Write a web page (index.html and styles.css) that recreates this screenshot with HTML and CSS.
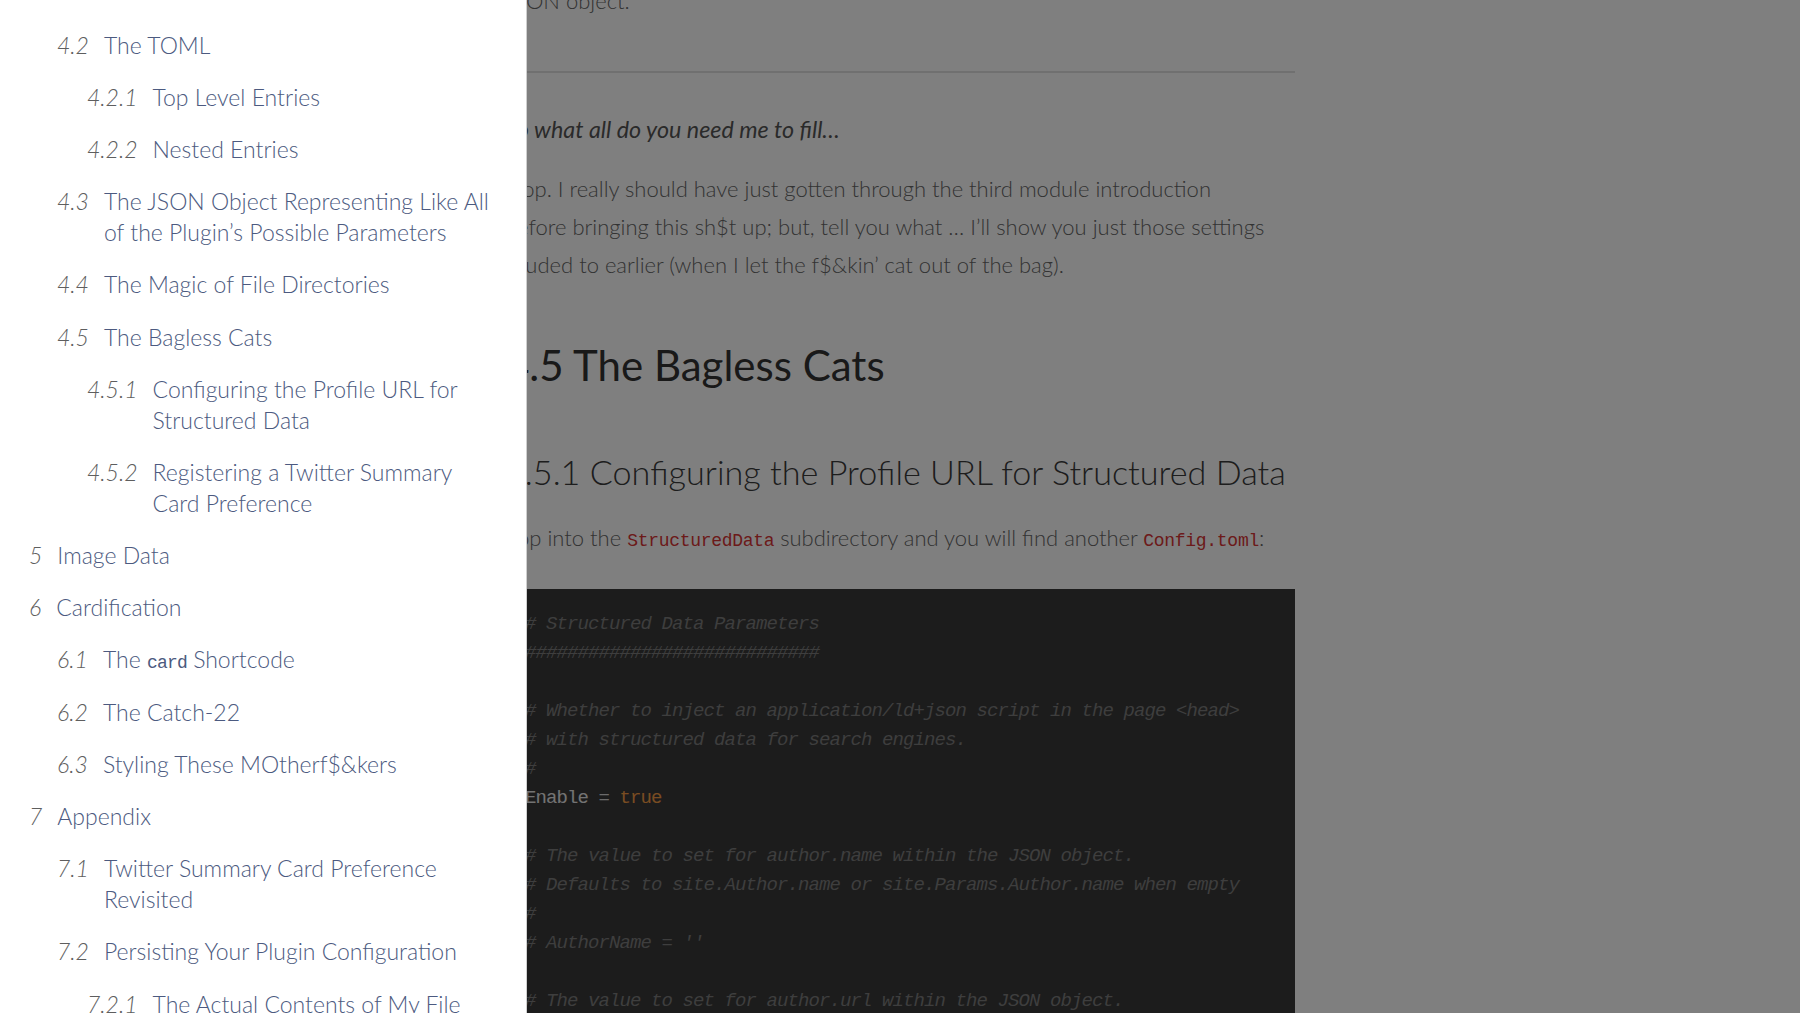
FILE: index.html
```html
<!DOCTYPE html>
<html lang="en">
<head>
<meta charset="utf-8">
<title>Hugo Plugins — Structured Data</title>
<link rel="stylesheet" href="styles.css">
</head>
<body>
<main class="page">
  <article class="content">
    <p class="tail">JSON object.</p>
    <hr class="rule">
    <p class="lead"><em>So what all do you need me to fill…</em></p>
    <p class="body">Oop. I really should have just gotten through the third module introduction<br>before bringing this sh$t up; but, tell you what … I’ll show you just those settings<br>alluded to earlier (when I let the f$&amp;kin’ cat out of the bag).</p>
    <h2 class="h2">4.5 The Bagless Cats</h2>
    <h3 class="h3">4.5.1 Configuring the Profile URL for Structured Data</h3>
    <p class="body intro">Pop into the <code class="ic">StructuredData</code> subdirectory and you will find another <code class="ic">Config.toml</code>:</p>
    <pre class="code"><span class="cm"># Structured Data Parameters</span>
<span class="cm">############################</span>

<span class="cm"># Whether to inject an application/ld+json script in the page &lt;head&gt;</span>
<span class="cm"># with structured data for search engines.</span>
<span class="cm">#</span>
<span class="key">Enable</span> <span class="op">=</span> <span class="bool">true</span>

<span class="cm"># The value to set for author.name within the JSON object.</span>
<span class="cm"># Defaults to site.Author.name or site.Params.Author.name when empty</span>
<span class="cm">#</span>
<span class="cm"># AuthorName = ''</span>

<span class="cm"># The value to set for author.url within the JSON object.</span></pre>
  </article>
</main>
<div class="scrim"></div>
<nav class="drawer">
  <ul class="toc">
    <li class="item l2"><span class="num">4.2</span><span class="txt">The TOML</span></li>
    <li class="item l3"><span class="num">4.2.1</span><span class="txt">Top Level Entries</span></li>
    <li class="item l3"><span class="num">4.2.2</span><span class="txt">Nested Entries</span></li>
    <li class="item l2"><span class="num">4.3</span><span class="txt">The JSON Object Representing Like All<br>of the Plugin’s Possible Parameters</span></li>
    <li class="item l2"><span class="num">4.4</span><span class="txt">The Magic of File Directories</span></li>
    <li class="item l2"><span class="num">4.5</span><span class="txt">The Bagless Cats</span></li>
    <li class="item l3"><span class="num">4.5.1</span><span class="txt">Configuring the Profile URL for<br>Structured Data</span></li>
    <li class="item l3"><span class="num">4.5.2</span><span class="txt">Registering a Twitter Summary<br>Card Preference</span></li>
    <li class="item l1"><span class="num">5</span><span class="txt">Image Data</span></li>
    <li class="item l1"><span class="num">6</span><span class="txt">Cardification</span></li>
    <li class="item l2"><span class="num">6.1</span><span class="txt">The <code class="tc">card</code> Shortcode</span></li>
    <li class="item l2"><span class="num">6.2</span><span class="txt">The Catch-22</span></li>
    <li class="item l2"><span class="num">6.3</span><span class="txt">Styling These MOtherf$&amp;kers</span></li>
    <li class="item l1"><span class="num">7</span><span class="txt">Appendix</span></li>
    <li class="item l2"><span class="num">7.1</span><span class="txt">Twitter Summary Card Preference<br>Revisited</span></li>
    <li class="item l2"><span class="num">7.2</span><span class="txt">Persisting Your Plugin Configuration</span></li>
    <li class="item l3"><span class="num">7.2.1</span><span class="txt">The Actual Contents of My File</span></li>
  </ul>
</nav>
</body>
</html>
```
FILE: styles.css
```css
html, body {
  margin: 0;
  padding: 0;
  height: 100%;
  overflow: hidden;
}

body {
  background: #ffffff;
  font-family: Lato, "Open Sans", "Liberation Sans", sans-serif;
  font-weight: 300;
  color: #555555;
}

.page {
  height: 100%;
}

.content {
  width: 790px;
  margin: 0 auto;
}

.tail {
  margin: -18px 0 0;
  font-size: 22px;
  line-height: 38px;
  color: #666666;
}

.rule {
  margin: 51px 0 0;
  border: 0;
  border-top: 2px solid #e0e0e0;
  height: 0;
}

.lead {
  margin: 37px 0 0;
  font-size: 23.3px;
  line-height: 38px;
  font-weight: 400;
  color: #555555;
}

.lead em {
  font-style: italic;
}

.body {
  margin: 22px 0 0;
  font-size: 22px;
  line-height: 38px;
  color: #666666;
}

.h2 {
  margin: 57px 0 0;
  font-size: 42px;
  line-height: 48px;
  font-weight: 400;
  color: #333333;
}

.h3 {
  margin: 61px 0 0;
  font-size: 34.2px;
  line-height: 44px;
  font-weight: 300;
  color: #3a3a3a;
}

.intro {
  margin-top: 25px;
}

.ic {
  font-family: "Liberation Mono", "DejaVu Sans Mono", monospace;
  font-size: 18px;
  line-height: 1px;
  letter-spacing: -0.3px;
  color: #d83434;
}

.code {
  margin: 32px 0 0;
  padding: 21px 20px 40px;
  background: #383838;
  font-family: "Liberation Mono", "DejaVu Sans Mono", monospace;
  font-size: 19px;
  line-height: 29px;
  letter-spacing: -0.9px;
  color: #c8c8c8;
  white-space: pre;
}

.cm {
  color: #7c7c7c;
  font-style: italic;
}

.key {
  color: #e6e6e6;
}

.op {
  color: #d6d6d6;
}

.bool {
  color: #f29a45;
}

.scrim {
  position: fixed;
  inset: 0;
  background: rgba(0, 0, 0, 0.5);
}

.drawer {
  position: fixed;
  top: 0;
  left: 0;
  bottom: 0;
  width: 526px;
  background: #ffffff;
  border-right: 1px solid #cfcfcf;
  overflow: hidden;
}

.toc {
  list-style: none;
  margin: 0;
  padding: 19px 28px 0 0;
}

.item {
  display: flex;
  gap: 15px;
  padding: 10.6px 0;
  font-size: 23px;
  line-height: 31px;
}

.l1 { padding-left: 29px; }
.l2 { padding-left: 57px; }
.l3 { padding-left: 87px; }

.num {
  flex: none;
  font-style: italic;
  color: #5e5e5e;
}

.txt {
  color: #4c5a80;
}

.tc {
  font-family: "Liberation Mono", "DejaVu Sans Mono", monospace;
  font-size: 18px;
  line-height: 1px;
  letter-spacing: -0.8px;
}
```
